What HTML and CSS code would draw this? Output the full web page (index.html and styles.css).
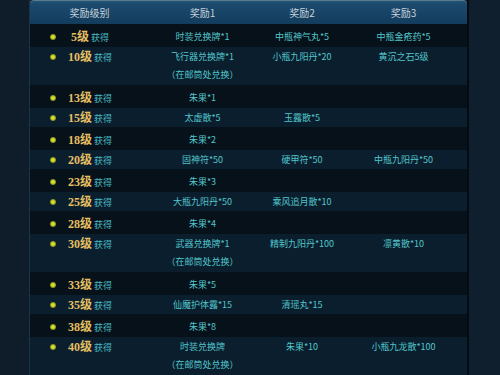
FILE: index.html
```html
<!DOCTYPE html>
<html lang="zh">
<head>
<meta charset="utf-8">
<link rel="stylesheet" href="styles.css">
</head>
<body>
<div class="page">
  <div class="table">
    <div class="head">
      <div class="hc">奖励级别</div>
      <div class="hc">奖励1</div>
      <div class="hc">奖励2</div>
      <div class="hc">奖励3</div>
    </div>

    <div class="row dark">
      <div class="lv"><i class="dot"></i><span class="lt"><b>5级</b> 获得</span></div>
      <div class="c">时装兑换牌*1</div><div class="c">中瓶神气丸*5</div><div class="c">中瓶金疮药*5</div>
    </div>
    <div class="row light double">
      <div class="lv"><i class="dot"></i><span class="lt"><b>10级</b> 获得</span></div>
      <div class="c">飞行器兑换牌*1<br>（在邮筒处兑换）</div><div class="c">小瓶九阳丹*20</div><div class="c">黄沉之石5级</div>
    </div>
    <div class="row dark">
      <div class="lv"><i class="dot"></i><span class="lt"><b>13级</b> 获得</span></div>
      <div class="c">朱果*1</div><div class="c"></div><div class="c"></div>
    </div>
    <div class="row light">
      <div class="lv"><i class="dot"></i><span class="lt"><b>15级</b> 获得</span></div>
      <div class="c">太虚散*5</div><div class="c">玉露散*5</div><div class="c"></div>
    </div>
    <div class="row dark">
      <div class="lv"><i class="dot"></i><span class="lt"><b>18级</b> 获得</span></div>
      <div class="c">朱果*2</div><div class="c"></div><div class="c"></div>
    </div>
    <div class="row light">
      <div class="lv"><i class="dot"></i><span class="lt"><b>20级</b> 获得</span></div>
      <div class="c">固神符*50</div><div class="c">硬甲符*50</div><div class="c">中瓶九阳丹*50</div>
    </div>
    <div class="row dark">
      <div class="lv"><i class="dot"></i><span class="lt"><b>23级</b> 获得</span></div>
      <div class="c">朱果*3</div><div class="c"></div><div class="c"></div>
    </div>
    <div class="row light">
      <div class="lv"><i class="dot"></i><span class="lt"><b>25级</b> 获得</span></div>
      <div class="c">大瓶九阳丹*50</div><div class="c">乘风追月散*10</div><div class="c"></div>
    </div>
    <div class="row dark">
      <div class="lv"><i class="dot"></i><span class="lt"><b>28级</b> 获得</span></div>
      <div class="c">朱果*4</div><div class="c"></div><div class="c"></div>
    </div>
    <div class="row light double">
      <div class="lv"><i class="dot"></i><span class="lt"><b>30级</b> 获得</span></div>
      <div class="c">武器兑换牌*1<br>（在邮筒处兑换）</div><div class="c">精制九阳丹*100</div><div class="c">凛黄散*10</div>
    </div>
    <div class="row dark">
      <div class="lv"><i class="dot"></i><span class="lt"><b>33级</b> 获得</span></div>
      <div class="c">朱果*5</div><div class="c"></div><div class="c"></div>
    </div>
    <div class="row light">
      <div class="lv"><i class="dot"></i><span class="lt"><b>35级</b> 获得</span></div>
      <div class="c">仙魔护体露*15</div><div class="c">清瑶丸*15</div><div class="c"></div>
    </div>
    <div class="row dark">
      <div class="lv"><i class="dot"></i><span class="lt"><b>38级</b> 获得</span></div>
      <div class="c">朱果*8</div><div class="c"></div><div class="c"></div>
    </div>
    <div class="row light double">
      <div class="lv"><i class="dot"></i><span class="lt"><b>40级</b> 获得</span></div>
      <div class="c">时装兑换牌<br>（在邮筒处兑换）</div><div class="c">朱果*10</div><div class="c">小瓶九龙散*100</div>
    </div>
  </div>
  <div class="side"></div>
</div>
</body>
</html>
```

FILE: styles.css
```css
html, body {
  margin: 0;
  padding: 0;
}
body {
  width: 500px;
  height: 375px;
  overflow: hidden;
  background: #0e1d29;
  font-family: "Noto Sans CJK SC", "Noto Sans", sans-serif;
}
.page {
  display: flex;
  padding-left: 29px;
  height: 375px;
}
.table {
  width: 438px;
  flex: none;
  border-left: 1px solid #1c3446;
  box-sizing: border-box;
}
.side {
  flex: 1;
  border-left: 2px solid #050b10;
  background: #0f1f2d;
}
.head {
  display: grid;
  grid-template-columns: 119px 107px 92px 111px;
  height: 23px;
  border-top: 1px solid #5c7a8e;
  border-radius: 4px 4px 0 0;
  background: linear-gradient(#245478 0, #1b4a6e 3px, #133c5c 100%);
}
.hc {
  text-align: center;
  color: #c9d2da;
  font-size: 10px;
  line-height: 24px;
}
.row {
  display: grid;
  grid-template-columns: 119px 107px 92px 111px;
  box-sizing: border-box;
  line-height: 18px;
}
.dark {
  background: #07111a;
  height: 23px;
  padding-top: 4px;
}
.light {
  background: #0b1e2e;
  height: 19px;
  padding-top: 1px;
}
.light.double {
  height: 38px;
  padding-top: 1px;
}
.lv {
  display: flex;
  align-items: flex-start;
  padding-left: 20px;
  padding-right: 25px;
}
.dot {
  width: 6px;
  height: 6px;
  margin-top: 6px;
  border-radius: 50%;
  background: radial-gradient(circle, #eef43a 0, #c4d424 35%, #7c8226 70%, #4a4c28 100%);
  flex: none;
}
.lt {
  flex: 1;
  text-align: center;
  color: #48bcc4;
  font-size: 9px;
  white-space: nowrap;
}
.lt b {
  color: #e5bf62;
  font-family: "Liberation Serif", "Noto Sans CJK SC", serif;
  font-size: 12px;
  font-weight: bold;
  vertical-align: -0.5px;
}
.c {
  text-align: center;
  color: #52c6cc;
  font-size: 9px;
  white-space: nowrap;
}
```
